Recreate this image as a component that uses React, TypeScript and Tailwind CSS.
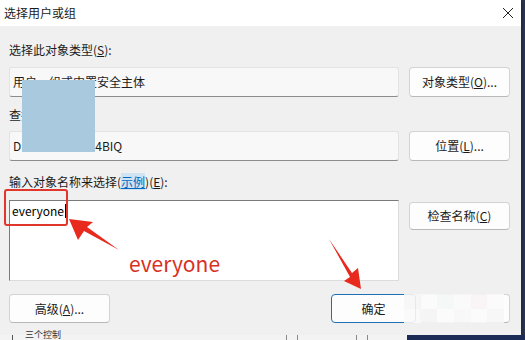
import React from 'react'

const FONT = { fontFamily: '"Noto Sans CJK SC", "Noto Sans", sans-serif' }

function Btn({ children, className = 'h-[30px] w-[101px]' }: { children?: React.ReactNode; className?: string }) {
  return (
    <div
      className={`flex items-center justify-center rounded-[4px] border border-[#d3d3d3] border-b-[#b8b8b8] bg-[#fdfdfd] text-[12px] text-[#1b1b1b] ${className}`}
    >
      {children}
    </div>
  )
}

function Field({ children }: { children: React.ReactNode }) {
  return (
    <div className="flex h-[30px] w-[390px] items-center rounded-[3px] border border-[#e3e3e3] border-b-[#8c8c8c] bg-[#f8f8f8] pl-[3px] text-[12px] text-[#1b1b1b]">
      {children}
    </div>
  )
}

export default function App() {
  return (
    <div className="relative h-[340px] w-[525px] overflow-hidden bg-[#2a3552]" style={FONT}>
      {/* dialog */}
      <div className="flex h-[335px] w-[521px] flex-col bg-[#f0f0f0] shadow-[1px_1px_3px_rgba(0,0,0,0.35)]">
        <div className="flex h-[26px] items-center justify-between bg-white pl-[4px] pr-[7px]">
          <span className="text-[12px] text-[#1b1b1b]">选择用户或组</span>
          <svg width="12" height="12" viewBox="0 0 12 12" className="text-[#222]">
            <path d="M1 1 L11 11 M11 1 L1 11" stroke="currentColor" strokeWidth="1" />
          </svg>
        </div>

        <div className="flex flex-col pl-[9px] pr-[11px]">
          <div className="mt-[16px] h-[16px] text-[12px] leading-[16px] text-[#1b1b1b]">
            选择此对象类型(<span className="underline">S</span>):
          </div>
          <div className="mt-[9px] flex gap-[10px]">
            <Field>用户、组或内置安全主体</Field>
            <Btn>
              对象类型(<span className="underline">O</span>)...
            </Btn>
          </div>

          <div className="mt-[10px] h-[16px] text-[12px] leading-[16px] text-[#1b1b1b]">
            查找位置(<span className="underline">F</span>):
          </div>
          <div className="mt-[8px] flex gap-[10px]">
            <Field>
              <span>D</span>
              <span className="inline-block w-[74px]" />
              <span>4BIQ</span>
            </Field>
            <Btn>
              位置(<span className="underline">L</span>)...
            </Btn>
          </div>

          <div className="mt-[13px] h-[16px] text-[12px] leading-[16px] text-[#1b1b1b]">
            输入对象名称来选择(<span className="bg-[#cfe3f3] text-[#0067c0] underline">示例</span>)(
            <span className="underline">E</span>):
          </div>
          <div className="mt-[10px] flex items-start gap-[10px]">
            <div className="h-[81px] w-[390px] border border-[#7a7a7a] border-b-[#dcdcdc] border-r-[#dcdcdc] bg-white pl-[2px] pt-[2px]">
              <div className="flex h-[16px] items-center text-[12px] text-black">
                everyone
                <span className="ml-[1px] inline-block h-[14px] w-px bg-black" />
              </div>
            </div>
            <Btn className="mt-[2px] h-[28px] w-[101px]">
              检查名称(<span className="underline">C</span>)
            </Btn>
          </div>

          <div className="mt-[13px] flex items-center">
            <Btn className="h-[29px] w-[101px]">
              高级(<span className="underline">A</span>)...
            </Btn>
            <div className="ml-auto flex gap-[4px]">
              <div className="flex h-[29px] w-[85px] items-center justify-center rounded-[4px] border border-[#1f6fb5] bg-[#fdfdfd] text-[12px] text-[#1b1b1b]">
                确定
              </div>
              <Btn className="h-[29px] w-[90px]" />
            </div>
          </div>
        </div>
      </div>

      {/* window behind, visible below the dialog */}
      <div className="absolute left-0 top-[335px] flex h-[5px] w-[525px]">
        <div className="flex h-full w-[407px] bg-[#f3f3f3]">
          <div className="ml-[12px] h-full w-px bg-[#555]" />
          <div className="ml-[12px] mt-[-6px] h-[11px] text-[9px] leading-[11px] text-[#333]">三个控制</div>
          <div className="ml-[225px] h-full w-px bg-[#888]" />
          <div className="ml-[10px] h-full w-px bg-[#888]" />
          <div className="ml-[58px] h-full w-px bg-[#888]" />
          <div className="ml-[10px] h-full w-px bg-[#888]" />
        </div>
        <div className="h-full flex-1 bg-[#1c2b55]" />
      </div>

      {/* privacy mask over location */}
      <div className="absolute left-[22px] top-[80px] h-[72px] w-[73px] bg-[#a9c9de]" />

      {/* mosaic over cancel button */}
      <div className="absolute left-[404px] top-[294px] grid h-[29px] w-[100px] grid-cols-6 opacity-90">
        <div className="bg-[#f7f7f7]" />
        <div className="bg-[#fbfbfb]" />
        <div className="bg-[#f4f8f7]" />
        <div className="bg-[#fafafa]" />
        <div className="bg-[#f9f5f6]" />
        <div className="bg-[#fbfbfb]" />
        <div className="bg-[#fafafa]" />
        <div className="bg-[#f5f5f5]" />
        <div className="bg-[#fbfbfb]" />
        <div className="bg-[#f8f8f8]" />
        <div className="bg-[#fbfbfb]" />
        <div className="bg-[#f7f7f7]" />
      </div>

      {/* annotations */}
      <div className="absolute left-[4px] top-[189px] h-[37px] w-[64px] rounded-[3px] border-2 border-[#e0362c]" />
      <svg className="absolute left-0 top-0" width="525" height="340" viewBox="0 0 525 340">
        <polygon points="69,219 93,222 87,227 119,250 84,231 78,240" fill="#e8291d" />
        <polygon points="329,239 352,273 358,268 361,289 344,281 350,277" fill="#e8291d" />
      </svg>
      <div className="absolute left-[129px] top-[250px] text-[21px] leading-[26px] text-[#d8311f]">everyone</div>
    </div>
  )
}
